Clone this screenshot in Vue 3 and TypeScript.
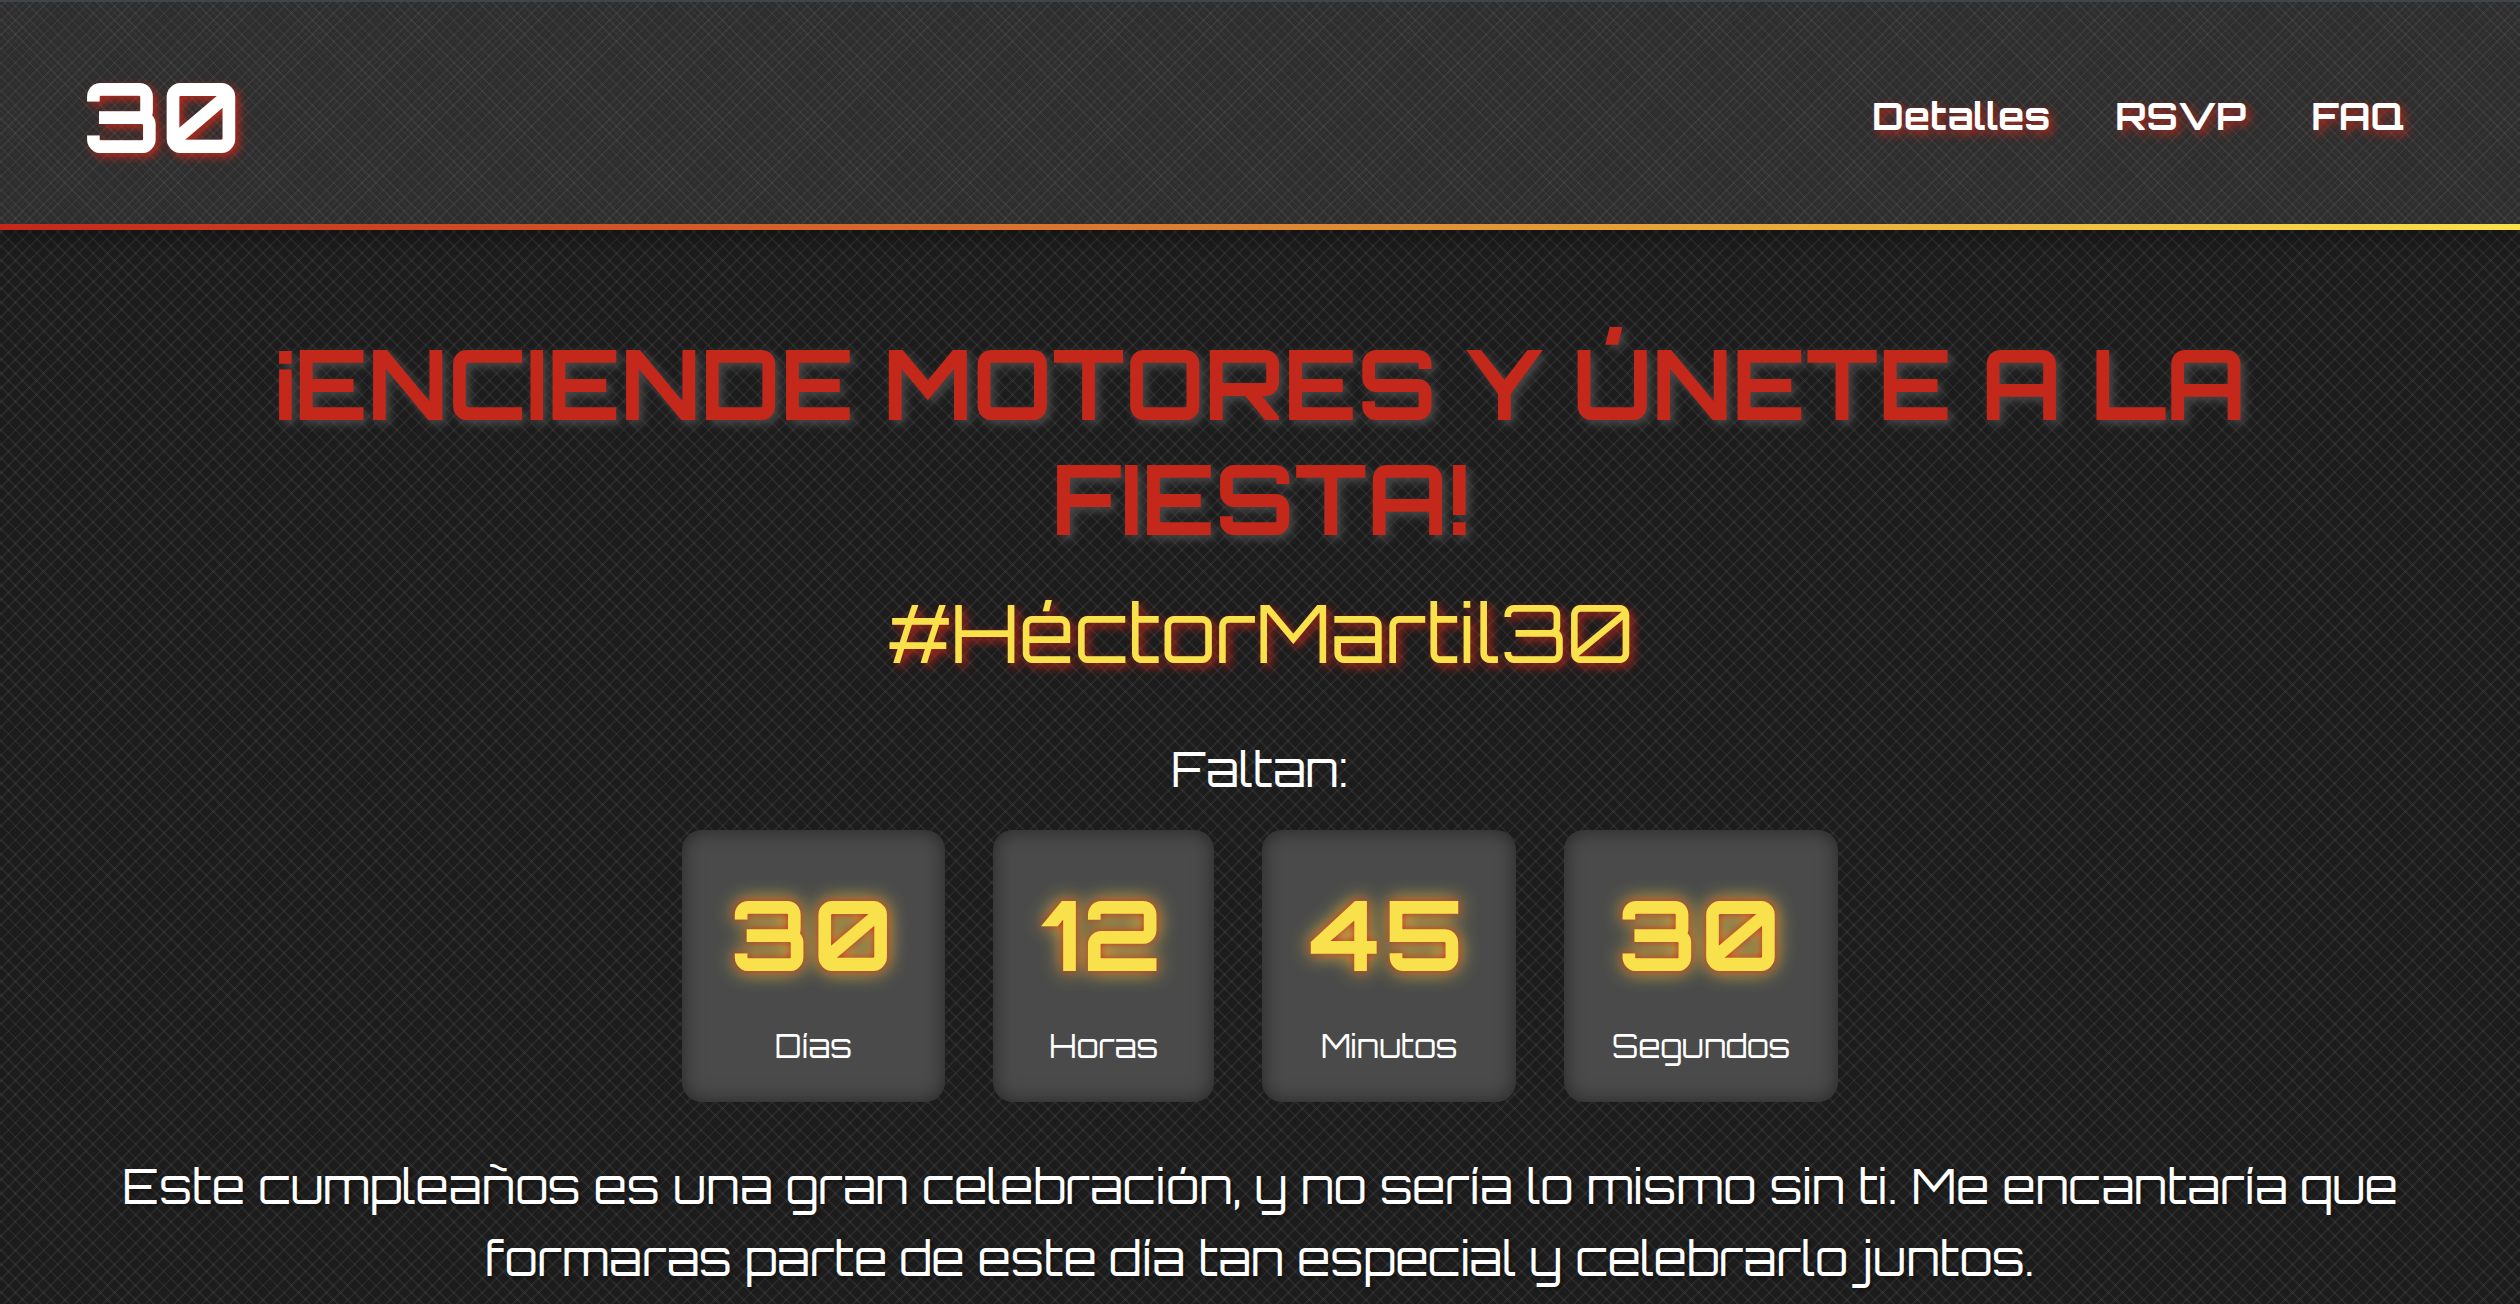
<script setup lang="ts">
interface Unit {
  value: string
  label: string
}

const units: Unit[] = [
  { value: '30', label: 'Días' },
  { value: '12', label: 'Horas' },
  { value: '45', label: 'Minutos' },
  { value: '30', label: 'Segundos' },
]
</script>

<template>
  <div class="page">
    <header class="header">
      <a class="logo" href="#inicio">30</a>
      <nav class="nav">
        <a href="#detalles">Detalles</a>
        <a href="#rsvp">RSVP</a>
        <a href="#faq">FAQ</a>
      </nav>
    </header>
    <main id="inicio" class="hero">
      <h1>¡ENCIENDE MOTORES Y ÚNETE A LA FIESTA!</h1>
      <h2>#HéctorMartil30</h2>
      <p class="lead">Faltan:</p>
      <div class="countdown">
        <div v-for="unit in units" :key="unit.label" class="unit">
          <span class="value">{{ unit.value }}</span>
          <span class="label">{{ unit.label }}</span>
        </div>
      </div>
      <p class="intro">
        Este cumpleaños es una gran celebración, y no sería lo mismo sin ti. Me encantaría que
        formaras parte de este día tan especial y celebrarlo juntos.
      </p>
    </main>
  </div>
</template>

<style>
html,
body {
  margin: 0;
  overflow: hidden;
  background: #1c1c1c;
}
</style>

<style scoped>
.page {
  box-sizing: border-box;
  min-height: 100vh;
  border-top: 2px solid #43484d;
  color: #fff;
  font-family: Orbitron, 'DejaVu Sans', sans-serif;
  background-color: #1c1c1c;
  background-image:
    repeating-linear-gradient(45deg, transparent 0 8px, rgba(255, 255, 255, 0.05) 8px 10px),
    repeating-linear-gradient(-45deg, transparent 0 8px, rgba(255, 255, 255, 0.05) 8px 10px);
}

.header {
  display: flex;
  align-items: center;
  justify-content: space-between;
  padding: 54px 116px 54px 82px;
  background-color: #2d2d2d;
  background-image:
    linear-gradient(90deg, #c4281b, #f8e14b),
    repeating-linear-gradient(45deg, transparent 0 8px, rgba(255, 255, 255, 0.03) 8px 10px),
    repeating-linear-gradient(-45deg, transparent 0 8px, rgba(255, 255, 255, 0.03) 8px 10px),
    repeating-linear-gradient(45deg, transparent 0 4px, rgba(255, 255, 255, 0.03) 4px 5px),
    repeating-linear-gradient(-45deg, transparent 0 4px, rgba(255, 255, 255, 0.03) 4px 5px);
  background-repeat: no-repeat;
  background-position: left bottom;
  background-size: 100% 6px, auto, auto, auto, auto;
  box-shadow: 0 8px 16px rgba(0, 0, 0, 0.3);
}

.logo,
.nav a {
  color: #fff;
  font-weight: 700;
  text-decoration: none;
  text-shadow: 4px 4px 10px rgba(196, 40, 27, 0.9);
}

.logo {
  font-size: 96px;
  line-height: 120px;
}

.nav {
  display: flex;
  gap: 65px;
}

.nav a {
  font-size: 38px;
  line-height: 48px;
}

.hero {
  padding: 96px 96px 0;
  text-align: center;
}

h1 {
  margin: 0;
  color: #c4281b;
  font-size: 96px;
  font-weight: 700;
  line-height: 115px;
  text-shadow: 4px 4px 10px #4a4a4a;
}

h2 {
  margin: 24px 0 0;
  color: #f8e14b;
  font-size: 80px;
  font-weight: 400;
  line-height: 104px;
  text-shadow: 4px 4px 10px rgba(196, 40, 27, 0.9);
}

.lead {
  margin: 48px 0 0;
  font-size: 48px;
  line-height: 74px;
}

.countdown {
  display: flex;
  justify-content: center;
  gap: 48px;
  margin-top: 24px;
}

.unit {
  display: flex;
  flex-direction: column;
  align-items: center;
  padding: 48px 48px 32px;
  border-radius: 20px;
  background: #4a4a4a;
  box-shadow: inset 0 0 20px rgba(0, 0, 0, 0.5);
}

.value {
  color: #f8e14b;
  font-size: 96px;
  font-weight: 700;
  letter-spacing: 4px;
  line-height: 112px;
  text-shadow:
    0 0 10px #c4281b,
    0 0 20px #f8e14b;
}

.label {
  margin-top: 32px;
  font-size: 32px;
  line-height: 48px;
}

.intro {
  margin: 48px 0 0;
  font-size: 48px;
  line-height: 72px;
  text-shadow: 2px 2px 4px rgba(0, 0, 0, 0.5);
}
</style>
